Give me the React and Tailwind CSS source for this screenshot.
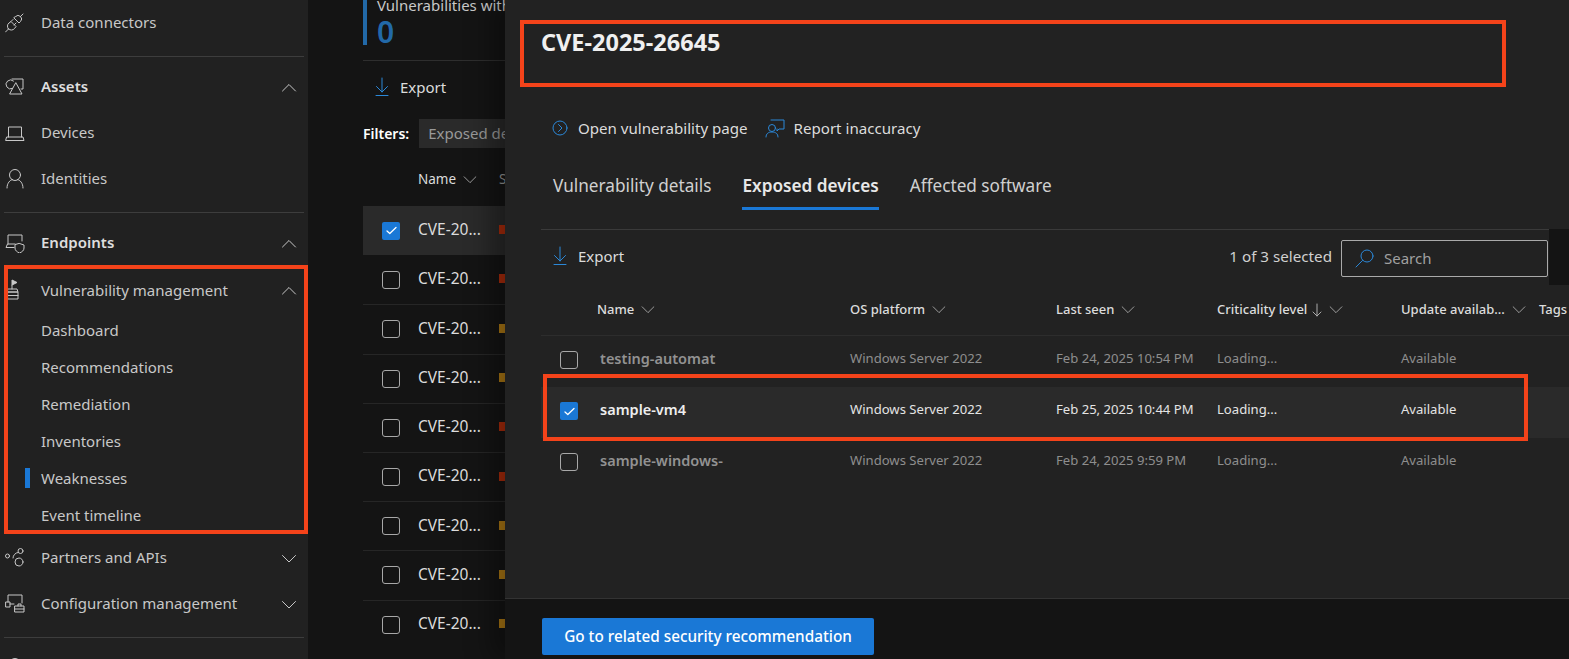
const ic = { fill: "none", stroke: "currentColor", strokeWidth: 1, strokeLinecap: "round", strokeLinejoin: "round" };

function Chevron({ up, className = "" }) {
  return (
    <svg width="16" height="9" viewBox="0 0 16 9" className={`shrink-0 ${className}`} {...ic}>
      <path d={up ? "M1.5 8 8 1.5 14.5 8" : "M1.5 1.5 8 8 14.5 1.5"} />
    </svg>
  );
}

function Plug() {
  return (
    <svg width="20" height="20" viewBox="0 0 20 20" {...ic}>
      <path d="M.5 19 3.500 16" />
      <path d="M3.500 16a4 4 0 0 1 .5-6l2-1.500 5 5-1.500 2a4 4 0 0 1-6 .500z" />
      <path d="M6 8.500 8 6.500M9 12l2-2" />
      <path d="M9 5 14 10l1.500-1.500a3.500 3.500 0 0 0-5-5zM15.500 3.500 18 1" />
    </svg>
  );
}
function Shapes() {
  return (
    <svg width="20" height="20" viewBox="0 0 20 20" {...ic}>
      <path d="M7.500 11.500A4.500 4.500 0 1 1 8.500 4" /><path d="M7 2h11v10h-2" /><path d="M11 6 17 17H5z" />
    </svg>
  );
}
function Laptop() {
  return (
    <svg width="20" height="20" viewBox="0 0 20 20" {...ic}>
      <path d="M3.500 14V4h13v10" /><path d="M1 17.500h18l-1-3.500H2z" />
    </svg>
  );
}
function Person() {
  return (
    <svg width="20" height="22" viewBox="0 0 20 22" {...ic}>
      <circle cx="10" cy="7" r="5.500" /><path d="M2 20c0-5 3-8 5.500-8.500M18 20c0-5-3-8-5.500-8.500" />
    </svg>
  );
}
function DeviceShield() {
  return (
    <svg width="20" height="20" viewBox="0 0 20 20" {...ic}>
      <path d="M3 11V2h14v6" /><path d="M9 14.500H1l1.500-3.500H10" />
      <path d="M14.500 10.500 19 12v3c0 2.500-2 4-4.500 5C12 19 10 17.500 10 15v-3z" />
    </svg>
  );
}
function FlagBox() {
  return (
    <svg width="20" height="22" viewBox="0 0 20 22" {...ic}>
      <path d="M7 10V1l5 2.500-5 2.500" fill="currentColor" />
      <path d="M3 10h9l1 3H3zM3 13h10v7H3zM3 16.500h10" />
    </svg>
  );
}
function Partners() {
  return (
    <svg width="20" height="20" viewBox="0 0 20 20" {...ic}>
      <circle cx="2.500" cy="8" r="2" /><circle cx="15.500" cy="3" r="2.500" /><circle cx="14" cy="14" r="4" />
      <path d="M8 10a5.500 5.500 0 0 1 5-5.500" />
    </svg>
  );
}
function ConfigIcon() {
  return (
    <svg width="20" height="20" viewBox="0 0 20 20" {...ic}>
      <path d="M3 8V1h14v8" /><path d="M1 8h4v5H1z" /><path d="M10 12h9v6h-9zM13 12v-2h3v2M10 15h9" /><path d="M5 10h4" />
    </svg>
  );
}
function ExportIcon() {
  return (
    <svg width="16" height="20" viewBox="0 0 16 20" className="shrink-0 text-[#2b88d8]" {...ic}>
      <path d="M8 1v14M2.500 9.500 8 15l5.500-5.500M2 18.500h12" />
    </svg>
  );
}
function Check() {
  return (
    <svg width="11" height="9" viewBox="0 0 11 9" fill="none" stroke="white" strokeWidth="1.300" strokeLinecap="round" strokeLinejoin="round">
      <path d="M1 5 3.800 7.500 10 1.500" />
    </svg>
  );
}
function Box({ on }) {
  return on ? (
    <div className="flex h-[18px] w-[18px] shrink-0 items-center justify-center rounded-[2px] bg-[#1a78d6]"><Check /></div>
  ) : (
    <div className="h-[18px] w-[18px] shrink-0 rounded-[3px] border border-[#a8a8a8]" />
  );
}

function NavItem({ icon, label, bold, up, down, low }) {
  return (
    <div className="flex h-[46px] items-center pl-[5px] pr-[11px] text-[#c8c8c8]">
      <span className="flex w-[36px] shrink-0">{icon}</span>
      <span className={`${low ? "" : "-mt-[2px]"} ${bold ? "font-semibold text-[#dedede]" : ""}`}>{label}</span>
      {up && <Chevron up className="ml-auto" />}
      {down && <Chevron className="ml-auto" />}
    </div>
  );
}
function SubItem({ label, active }) {
  return (
    <div className="relative flex h-[37px] items-center pl-[41px] text-[#c8c8c8]">
      {active && <span className="absolute left-[25px] top-[7px] h-[20px] w-[5px] bg-[#1a78d6]" />}
      <span className="-mt-[2px]">{label}</span>
    </div>
  );
}
const Sep = ({ cls }) => <div className={`mx-[4px] h-px bg-[#3d3d3d] ${cls}`} />;

function Sidebar() {
  return (
    <aside className="w-[308px] shrink-0 overflow-hidden bg-[#212121] text-[15px]">
      <NavItem icon={<Plug />} label="Data connectors" />
      <Sep cls="mt-[10px] mb-[7px]" />
      <NavItem icon={<Shapes />} label="Assets" bold up />
      <NavItem icon={<Laptop />} label="Devices" />
      <NavItem icon={<Person />} label="Identities" />
      <Sep cls="mt-[10px] mb-[7px]" />
      <NavItem icon={<DeviceShield />} label="Endpoints" bold up />
      <div className="h-px" />
      <NavItem icon={<FlagBox />} label="Vulnerability management" up low />
      <SubItem label="Dashboard" />
      <SubItem label="Recommendations" />
      <SubItem label="Remediation" />
      <SubItem label="Inventories" />
      <SubItem label="Weaknesses" active />
      <SubItem label="Event timeline" />
      <NavItem icon={<Partners />} label="Partners and APIs" down />
      <NavItem icon={<ConfigIcon />} label="Configuration management" down />
      <Sep cls="mt-[10px] mb-[7px]" />
      <NavItem icon={<Person />} label="" />
    </aside>
  );
}

const RED = "bg-[#ad2c0b]";
const AMB = "bg-[#b07a14]";
const severities = [RED, RED, AMB, AMB, RED, RED, AMB, AMB, AMB];

function Main() {
  return (
    <main className="w-[197px] shrink-0 overflow-hidden bg-[#141414] pl-[55px] text-[15px] text-[#dcdcdc]">
      <div className="flex h-[61px] flex-col border-b border-[#2e2e2e]">
        <div className="h-[45px] w-max whitespace-nowrap border-l-4 border-[#2269a8] pl-[10px]">
          <div className="-mt-[5px] leading-[20px] text-[#c8c8c8]">Vulnerabilities with exposed devices</div>
          <div className="text-[30px] font-semibold leading-[34px] text-[#2269a8]">0</div>
        </div>
      </div>
      <div className="flex h-[52px] items-center gap-[10px] pl-[11px]">
        <ExportIcon /><span>Export</span>
      </div>
      <div className="flex h-[40px] items-center gap-[10px] whitespace-nowrap">
        <span className="text-[14px] font-semibold text-white">Filters:</span>
        <span className="flex h-[29px] shrink-0 items-center bg-[#2a2a2a] px-[9px] text-[#999]">Exposed devices</span>
      </div>
      <div className="flex h-[53px] items-center whitespace-nowrap pl-[55px] text-[13.500px]">
        <span className="flex w-[81px] shrink-0 items-center"><span>Name</span><Chevron className="ml-[6px] scale-90 text-[#aaa]" /></span>
        <span className="shrink-0 text-[#999]">Severity</span>
      </div>
      {severities.map((c, i) => (
        <div key={i} className={`flex h-[49.200px] items-center whitespace-nowrap pl-[19px] ${i === 0 ? "bg-[#2a2a2a]" : i === 1 ? "" : "border-t border-[#262626]"}`}>
          <Box on={i === 0} />
          <span className="-mt-[2px] ml-[18px] w-[81px] shrink-0 text-[15.500px] text-[#dcdcdc]">CVE-20...</span>
          <span className={`-mt-[2px] h-[9px] w-[10px] shrink-0 ${c}`} />
        </div>
      ))}
    </main>
  );
}

function Head({ label, sort }) {
  return (
    <div className="flex items-center whitespace-nowrap">
      <span>{label}</span>
      {sort && (
        <svg width="10" height="14" viewBox="0 0 10 14" className="ml-[5px] shrink-0 text-[#aaa]" {...ic}><path d="M5 1v12M1 9l4 4 4-4" /></svg>
      )}
      <Chevron className="ml-[6px] scale-90 text-[#aaa]" />
    </div>
  );
}

const rows = [
  ["testing-automat", "Feb 24, 2025 10:54 PM"],
  ["sample-vm4", "Feb 25, 2025 10:44 PM", true],
  ["sample-windows-", "Feb 24, 2025 9:59 PM"],
];

function Panel() {
  return (
    <section className="relative z-10 flex min-w-0 flex-1 flex-col bg-[#222222] shadow-[-14px_0_24px_rgba(0,0,0,0.35)]">
      <div className="relative h-[598px] overflow-hidden pl-[36px]">
        <h1 className="h-[98px] pt-[27px] text-[23.500px] font-bold leading-[30px] text-[#f0f0f0]">CVE-2025-26645</h1>
        <div className="flex h-[60px] items-center pl-[11px] text-[15.100px] text-[#dcdcdc]">
          <svg width="16" height="16" viewBox="0 0 16 16" className="shrink-0 text-[#2b88d8]" {...ic}><circle cx="8" cy="8" r="7" /><path d="M6.500 4.500 10 8l-3.500 3.500" /></svg>
          <span className="ml-[10px]">Open vulnerability page</span>
          <svg width="20" height="20" viewBox="0 0 20 20" className="ml-[17px] shrink-0 text-[#2b88d8]" {...ic}><circle cx="7" cy="10" r="3.500" /><path d="M1 19c0-3.500 2.500-5 6-5s6 1.500 6 5M6 2h13v9h-5l-2 2v-2" /></svg>
          <span className="ml-[9px]">Report inaccuracy</span>
        </div>
        <div className="flex h-[71px] items-start gap-[31px] pl-[12px] pt-[15px] text-[17.200px] leading-[26px] text-[#d0d0d0]">
          <span>Vulnerability details</span>
          <span className="h-[37px] border-b-[3px] border-[#1a78d6] font-semibold text-[#e8e8e8]">Exposed devices</span>
          <span>Affected software</span>
        </div>
        <div className="h-px bg-[#3a3a3a]" />
        <div className="flex h-[52px] items-center pl-[11px] text-[15px] text-[#dcdcdc]">
          <ExportIcon /><span className="ml-[10px]">Export</span>
          <span className="ml-auto mr-[9px] text-[15.200px] text-[#d0d0d0]">1 of 3 selected</span>
          <div className="relative z-10 mr-[21px] mt-[5px] flex h-[37px] w-[207px] items-center rounded-[2px] border border-[#aaaaaa] pl-[13px] text-[#a0a0a0]">
            <svg width="19" height="19" viewBox="0 0 19 19" className="shrink-0 text-[#2b88d8]" {...ic}><circle cx="12" cy="7" r="6" /><path d="M7.500 11.500 1 18" /></svg>
            <span className="ml-[10px]">Search</span>
          </div>
        </div>
        <div className="grid h-[54px] grid-cols-[56px_253px_206px_161px_184px_138px_1fr] items-center border-b border-[#2d2d2d] pt-[2px] text-[13px] font-medium text-[#dcdcdc]">
          <span />
          <Head label="Name" />
          <Head label="OS platform" />
          <Head label="Last seen" />
          <Head label="Criticality level" sort />
          <Head label="Update availab..." />
          <span>Tags</span>
        </div>
        {rows.map(([name, seen, sel]) => (
          <div key={name} className={`grid h-[51px] grid-cols-[59px_250px_206px_161px_184px_1fr] items-center text-[13.100px] ${sel ? "bg-[#2a2a2a] text-[#e4e4e4]" : "text-[#8e8e8e]"}`}>
            <span className="-mt-[3px] pl-[19px]"><Box on={sel} /></span>
            <span className={`-mt-[5px] text-[14.500px] font-semibold ${sel ? "text-[#eeeeee]" : "text-[#929292]"}`}>{name}</span>
            <span className="-mt-[5px]">Windows Server 2022</span>
            <span className="-mt-[5px]">{seen}</span>
            <span className="-mt-[5px]">Loading...</span>
            <span className="-mt-[5px]">Available</span>
          </div>
        ))}
        <div className="absolute right-0 top-[229px] h-[56px] w-[20px] bg-[#141414]" />
      </div>
      <footer className="flex flex-1 items-start border-t border-[#333333] bg-[#141414] pl-[37px] pt-[19px]">
        <button className="h-[37px] w-[332px] rounded-[2px] bg-[#1a78d6] text-[15.300px] font-medium text-white">Go to related security recommendation</button>
      </footer>
      <div className="pointer-events-none absolute left-[15px] top-[20px] h-[67px] w-[986px] border-[4px] border-[#f4431a]" />
      <div className="pointer-events-none absolute left-[38px] top-[374px] h-[67px] w-[985px] border-[4px] border-[#f4431a]" />
    </section>
  );
}

export default function App() {
  return (
    <div className="relative flex h-[659px] w-[1569px] overflow-hidden font-['Noto_Sans','Open_Sans',sans-serif]">
      <Sidebar />
      <Main />
      <Panel />
      <div className="pointer-events-none absolute left-[4px] top-[265px] z-20 h-[269px] w-[304px] border-[4px] border-[#f4431a]" />
    </div>
  );
}
